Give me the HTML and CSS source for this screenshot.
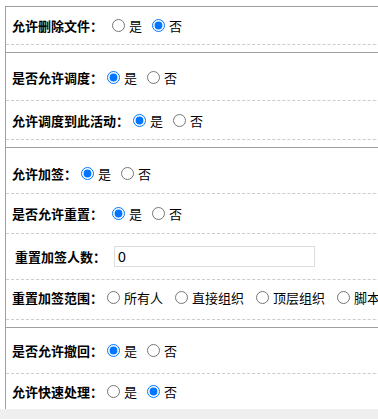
FILE: index.html
```html
<!DOCTYPE html>
<html lang="zh-CN">
<head>
    <meta charset="UTF-8">
    <meta name="viewport" content="width=device-width, initial-scale=1.0">
    <title>流程设置</title>
    <link rel="stylesheet" href="styles.css">
</head>
<body>
    <div class="page">
        <div class="panel">
            <div class="section">
                <div class="row row-first">
                    <span class="label wide">允许删除文件：</span>
                    <label class="opt"><input type="radio" name="del">是</label>
                    <label class="opt"><input type="radio" name="del" checked>否</label>
                </div>
            </div>

            <div class="section">
                <div class="row row-lead">
                    <span class="label">是否允许调度：</span>
                    <label class="opt"><input type="radio" name="dispatch" checked>是</label>
                    <label class="opt"><input type="radio" name="dispatch">否</label>
                </div>
                <div class="row">
                    <span class="label">允许调度到此活动：</span>
                    <label class="opt"><input type="radio" name="dispatchTo" checked>是</label>
                    <label class="opt"><input type="radio" name="dispatchTo">否</label>
                </div>
            </div>

            <div class="section">
                <div class="row row-tall row-down">
                    <span class="label">允许加签：</span>
                    <label class="opt"><input type="radio" name="sign" checked>是</label>
                    <label class="opt"><input type="radio" name="sign">否</label>
                </div>
                <div class="row row-mid">
                    <span class="label wide">是否允许重置：</span>
                    <label class="opt"><input type="radio" name="reset" checked>是</label>
                    <label class="opt"><input type="radio" name="reset">否</label>
                </div>
                <div class="row row-tall">
                    <span class="label indent">重置加签人数：</span>
                    <input class="text-input" type="text" value="0">
                </div>
                <div class="row row-mid row-up">
                    <span class="label">重置加签范围：</span>
                    <label class="opt loose"><input type="radio" name="scope">所有人</label>
                    <label class="opt loose"><input type="radio" name="scope">直接组织</label>
                    <label class="opt loose"><input type="radio" name="scope">顶层组织</label>
                    <label class="opt loose"><input type="radio" name="scope">脚本</label>
                </div>
            </div>

            <div class="section last">
                <div class="row row-tall">
                    <span class="label">是否允许撤回：</span>
                    <label class="opt"><input type="radio" name="recall" checked>是</label>
                    <label class="opt"><input type="radio" name="recall">否</label>
                </div>
                <div class="row row-end">
                    <span class="label">允许快速处理：</span>
                    <label class="opt"><input type="radio" name="fast">是</label>
                    <label class="opt"><input type="radio" name="fast" checked>否</label>
                </div>
            </div>
        </div>
    </div>
</body>
</html>
```

FILE: styles.css
```css
html, body {
    margin: 0;
    background: #efefef;
    overflow: hidden;
}
body {
    font-family: "Noto Sans CJK SC", "Noto Sans", sans-serif;
    font-size: 13px;
    color: #000;
}
.page {
    background: #fff;
    padding: 6px 0 0 5px;
}
.panel {
    width: 420px;
    border-top: 1px solid #a0a0a0;
    border-left: 1px solid #a0a0a0;
}
.section {
    padding-bottom: 7px;
    border-bottom: 1px solid #a0a0a0;
}
.section.last {
    padding-bottom: 0;
    border-bottom: none;
}
.row {
    box-sizing: border-box;
    display: flex;
    align-items: center;
    height: 39px;
    padding-left: 6px;
    border-bottom: 1px dashed #ccc;
    white-space: nowrap;
}
.row-first {
    height: 38px;
}
.row-lead {
    height: 48px;
    padding-top: 2px;
}
.row-tall {
    height: 46px;
}
.row-mid {
    height: 40px;
}
.row-down {
    padding-top: 5px;
}
.row-up {
    padding-bottom: 5px;
}
.row-end {
    height: 35px;
    border-bottom: none;
}
.label {
    font-weight: bold;
    margin-right: 4px;
}
.label.wide {
    margin-right: 9px;
}
.label.indent {
    margin-left: 3px;
    margin-right: 8px;
}
.opt {
    display: flex;
    align-items: center;
    margin-right: 10px;
}
.opt.loose {
    margin-right: 12px;
}
.opt input {
    width: 13px;
    height: 13px;
    margin: 0 4px 0 0;
}
.text-input {
    box-sizing: border-box;
    width: 201px;
    height: 21px;
    margin: 0;
    padding: 0 3px;
    border: 1px solid #ddd;
    font-family: "Liberation Sans", sans-serif;
    font-size: 14px;
    color: #000;
    outline: none;
}
```
